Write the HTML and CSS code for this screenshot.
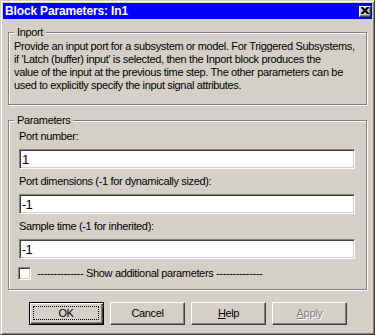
FILE: index.html
```html
<!DOCTYPE html>
<html lang="en">
<head>
    <meta charset="UTF-8">
    <title>Block Parameters: In1</title>
    <link rel="stylesheet" href="styles.css">
</head>
<body>
    <div class="window">
        <div class="titlebar">
            <span class="title">Block Parameters: In1</span>
            <span class="close">
                <svg width="8" height="7" viewBox="0 0 8 7"><path d="M0 0h2l2 2 2-2h2v1l-2.5 2.5L8 6v1H6L4 5 2 7H0V6l2.5-2.5L0 1z" fill="#000"/></svg>
            </span>
        </div>

        <div class="client">
            <div class="group group-info">
                <span class="legend">Inport</span>
                <p class="desc">
                    Provide an input port for a subsystem or model. For Triggered Subsystems,<br>
                    if 'Latch (buffer) input' is selected, then the Inport block produces the<br>
                    value of the input at the previous time step. The other parameters can be<br>
                    used to explicitly specify the input signal attributes.
                </p>
            </div>

            <div class="group group-params">
                <span class="legend">Parameters</span>
                <div class="field">
                    <div class="label">Port number:</div>
                    <div class="edit">1</div>
                </div>
                <div class="field">
                    <div class="label">Port dimensions (-1 for dynamically sized):</div>
                    <div class="edit">-1</div>
                </div>
                <div class="field">
                    <div class="label">Sample time (-1 for inherited):</div>
                    <div class="edit">-1</div>
                </div>
                <div class="check">
                    <span class="box"></span>
                    <span>-------------- Show additional parameters --------------</span>
                </div>
            </div>

            <div class="buttons">
                <div class="btn btn-default"><span class="focus">OK</span></div>
                <div class="btn">Cancel</div>
                <div class="btn"><span><u>H</u>elp</span></div>
                <div class="btn btn-disabled"><span><u>A</u>pply</span></div>
            </div>
        </div>
    </div>
</body>
</html>
```

FILE: styles.css
```css
* { margin: 0; padding: 0; box-sizing: border-box; }
body {
    font-family: "Liberation Sans", Arial, sans-serif;
    font-size: 11px;
    line-height: 13px;
    letter-spacing: -0.35px;
    color: #000;
    background: #d4d0c8;
}
.window {
    width: 375px;
    height: 335px;
    background: #d4d0c8;
    border: 1px solid;
    border-color: #d4d0c8 #404040 #404040 #d4d0c8;
    box-shadow: inset 1px 1px #fff, inset -1px -1px #808080;
    padding: 2px;
    display: flex;
    flex-direction: column;
}
.titlebar {
    height: 16px;
    background: #0000ff;
    color: #fff;
    display: flex;
    align-items: center;
    justify-content: space-between;
    padding: 0 1px 0 2px;
}
.title { font-size: 12px; font-weight: bold; letter-spacing: -0.15px; }
.close {
    width: 12px;
    height: 11px;
    background: #d4d0c8;
    border: 1px solid;
    border-color: #fff #404040 #404040 #fff;
    box-shadow: inset -1px -1px #808080;
    display: flex;
    align-items: center;
    justify-content: center;
    padding: 0 1px 1px 0;
}
.close svg { display: block; }
.client { flex: 1; padding: 13px 5px 0; }

/* etched group boxes */
.group {
    position: relative;
    border: 1px solid #808080;
    box-shadow: inset 1px 1px #fff, 1px 1px #fff;
}
.legend {
    position: absolute;
    top: -7px;
    left: 5px;
    padding: 0 3px;
    background: #d4d0c8;
}
.group-info { height: 73px; padding: 7px 5px 0; }
.group-params { height: 170px; margin-top: 15px; padding: 9px 10px 0; }

.field { margin-bottom: 6px; }
.label { margin-bottom: 6px; }
.edit {
    width: 336px;
    height: 20px;
    background: #fff;
    border: 1px solid;
    border-color: #808080 #fff #fff #808080;
    box-shadow: inset 1px 1px #404040, inset -1px -1px #d4d0c8;
    padding: 2px 2px 0;
    font-size: 13px;
    line-height: 16px;
    letter-spacing: -0.8px;
}
.check { display: flex; align-items: center; gap: 6px; margin: 8px 0 0 -1px; }
.box {
    width: 13px;
    height: 13px;
    background: #fff;
    border: 1px solid;
    border-color: #808080 #fff #fff #808080;
    box-shadow: inset 1px 1px #404040, inset -1px -1px #d4d0c8;
}

.buttons { display: flex; gap: 6px; margin: 12px 0 0 21px; }
.btn {
    width: 75px;
    height: 23px;
    border: 1px solid;
    border-color: #fff #404040 #404040 #fff;
    box-shadow: inset -1px -1px #808080;
    display: flex;
    align-items: center;
    justify-content: center;
    padding-bottom: 1px;
}
.btn-default {
    border-color: #000;
    box-shadow: inset 1px 1px #fff, inset -1px -1px #404040, inset -2px -2px #808080;
    padding: 3px 4px 4px 3px;
}
.focus {
    width: 100%;
    height: 100%;
    border: 1px dotted #000;
    display: flex;
    align-items: center;
    justify-content: center;
}
.btn-disabled { color: #808080; text-shadow: 1px 1px #fff; }
```
